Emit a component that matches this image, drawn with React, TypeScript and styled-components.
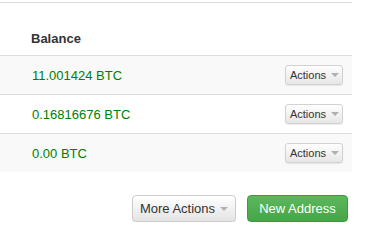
import React from "react";
import styled, { createGlobalStyle } from "styled-components";

const Global = createGlobalStyle`
  body { margin: 0; background: #fff; font-family: "Liberation Sans", Arial, Helvetica, sans-serif; color: #333; }
`;

const Page = styled.div`
  width: 352px;
  padding-top: 2px;
`;

const Table = styled.div`
  border-top: 1px solid #dddddd;
  display: flex;
  flex-direction: column;
`;

const HeaderRow = styled.div`
  height: 52px;
  display: flex;
  align-items: flex-end;
  padding: 0 0 9px 31px;
  box-sizing: border-box;
  font-weight: bold;
  font-size: 13px;
  color: #333;
`;

const Row = styled.div<{ $striped?: boolean }>`
  height: 39px;
  box-sizing: border-box;
  border-top: 1px solid #dddddd;
  background: ${(p) => (p.$striped ? "#f9f9f9" : "#ffffff")};
  display: flex;
  align-items: center;
  justify-content: space-between;
  padding: 0 9px 0 32px;
`;

const Amount = styled.span`
  color: #008000;
  font-size: 13px;
`;

const Caret = styled.span`
  display: inline-block;
  width: 0;
  height: 0;
  border-left: 4px solid transparent;
  border-right: 4px solid transparent;
  border-top: 4px solid #b0b0b0;
  margin-left: 5px;
`;

const SmallButton = styled.button`
  height: 20px;
  width: 58px;
  box-sizing: border-box;
  display: inline-flex;
  align-items: center;
  justify-content: center;
  padding: 0 0 0 1px;
  font-family: "Liberation Sans", Arial, sans-serif;
  font-size: 11px;
  color: #333;
  border: 1px solid #d2d2d2;
  border-radius: 3px;
  background: linear-gradient(to bottom, #ffffff, #e6e6e6);
  box-shadow: 0 1px 1px rgba(0, 0, 0, 0.08);
`;

const Footer = styled.div`
  display: flex;
  justify-content: flex-end;
  gap: 11px;
  margin-top: 23px;
  padding-right: 4px;
`;

const Button = styled.button<{ $primary?: boolean; $width: number }>`
  width: ${(p) => p.$width}px;
  height: 27px;
  box-sizing: border-box;
  display: inline-flex;
  align-items: center;
  justify-content: center;
  font-family: "Liberation Sans", Arial, sans-serif;
  font-size: 13px;
  border-radius: 4px;
  padding: 0;
  color: ${(p) => (p.$primary ? "#ffffff" : "#333333")};
  border: 1px solid ${(p) => (p.$primary ? "#3e9a3e" : "#cccccc")};
  background: ${(p) =>
    p.$primary
      ? "linear-gradient(to bottom, #5cb85c, #47a447)"
      : "linear-gradient(to bottom, #ffffff, #e4e4e4)"};
  box-shadow: 0 1px 1px rgba(0, 0, 0, 0.08);
`;

const rows = ["11.001424 BTC", "0.16816676 BTC", "0.00 BTC"];

export default function App() {
  return (
    <>
      <Global />
      <Page>
        <Table>
          <HeaderRow>Balance</HeaderRow>
          {rows.map((r, i) => (
            <Row key={r} $striped={i % 2 === 0}>
              <Amount>{r}</Amount>
              <SmallButton>
                Actions
                <Caret />
              </SmallButton>
            </Row>
          ))}
        </Table>
        <Footer>
          <Button $width={104}>
            More Actions
            <Caret />
          </Button>
          <Button $primary $width={101}>
            New Address
          </Button>
        </Footer>
      </Page>
    </>
  );
}
